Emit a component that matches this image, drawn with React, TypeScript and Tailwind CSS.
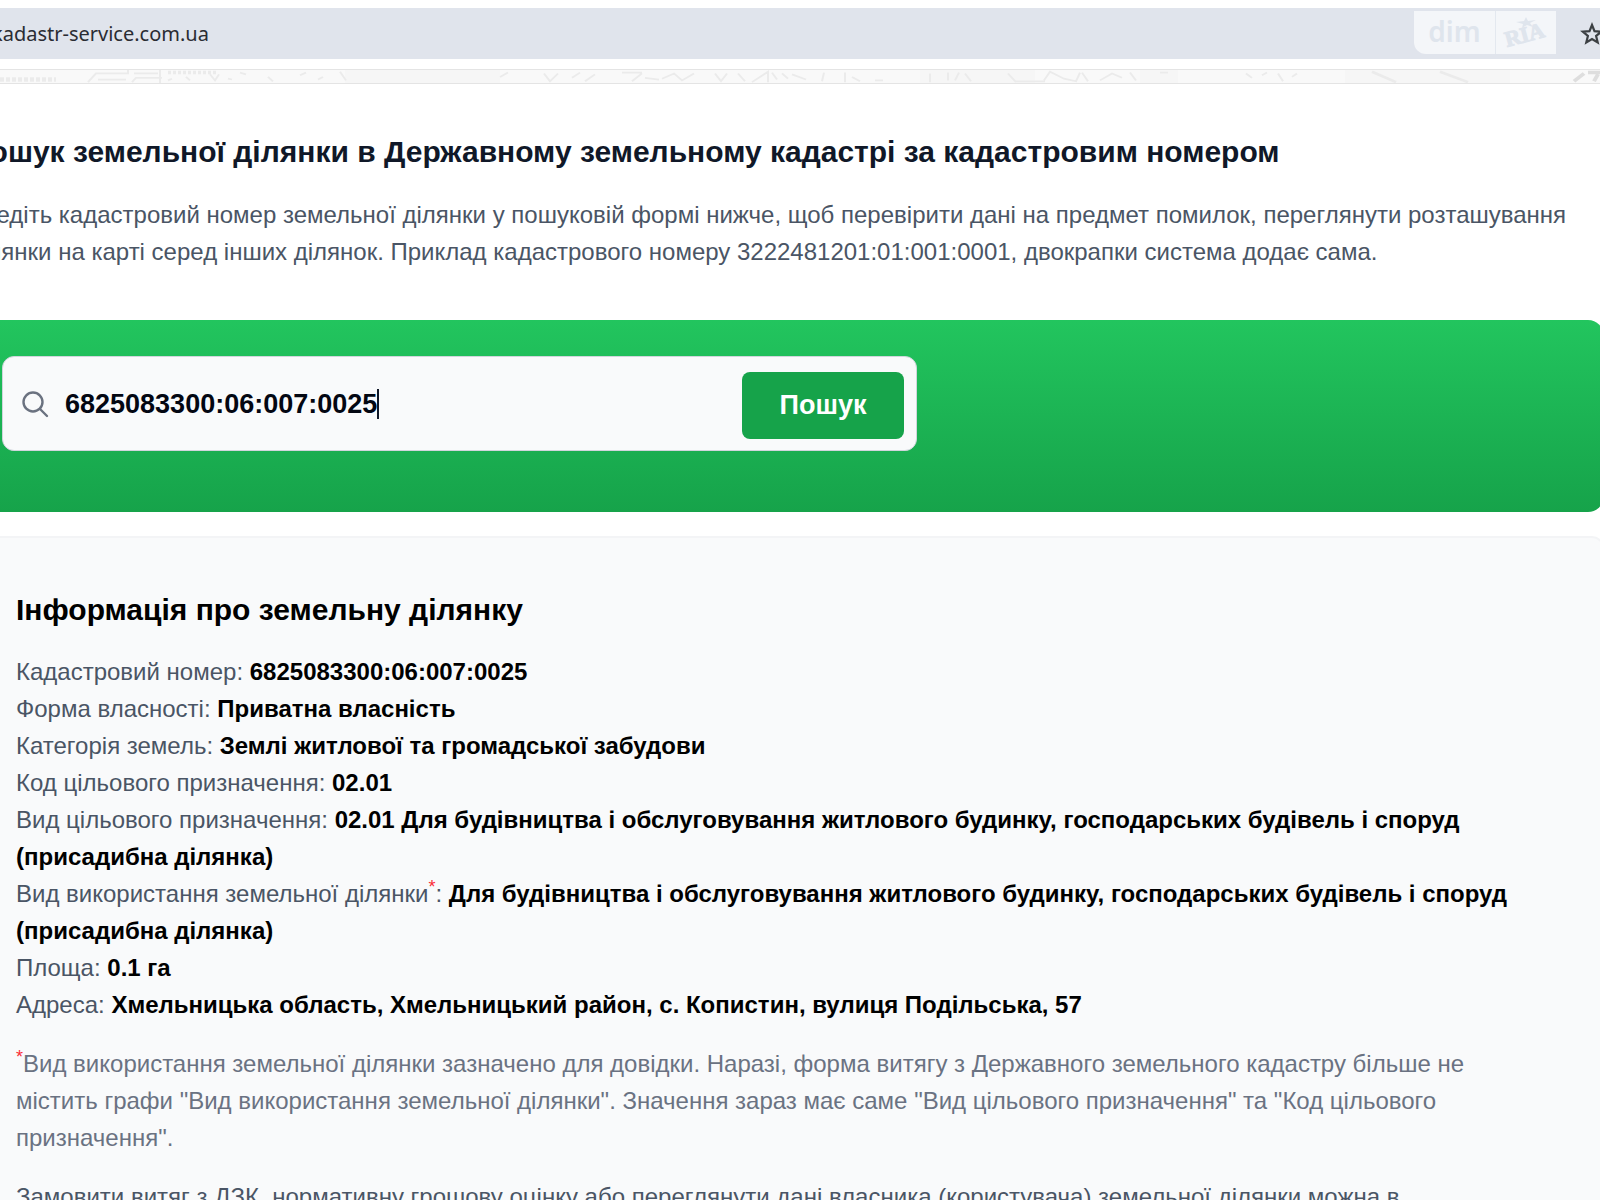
import React, { useState } from 'react';

interface ParcelField {
  label: string;
  value: string;
  hasNote?: boolean;
}

const parcelFields: ParcelField[] = [
  { label: 'Кадастровий номер', value: '6825083300:06:007:0025' },
  { label: 'Форма власності', value: 'Приватна власність' },
  { label: 'Категорія земель', value: 'Землі житлової та громадської забудови' },
  { label: 'Код цільового призначення', value: '02.01' },
  {
    label: 'Вид цільового призначення',
    value: '02.01 Для будівництва і обслуговування житлового будинку, господарських будівель і споруд (присадибна ділянка)',
  },
  {
    label: 'Вид використання земельної ділянки',
    value: 'Для будівництва і обслуговування житлового будинку, господарських будівель і споруд (присадибна ділянка)',
    hasNote: true,
  },
  { label: 'Площа', value: '0.1 га' },
  { label: 'Адреса', value: 'Хмельницька область, Хмельницький район, с. Копистин, вулиця Подільська, 57' },
];

const Asterisk = () => <sup className="text-lg leading-none text-red-500">*</sup>;

const Watermark = () => (
  <div className="mb-[2px] flex h-[43px] w-[142px] rounded-bl-xl bg-[#f4f6f9] text-[#dfe5ed]">
    <span className="flex w-[82px] items-center justify-center border-r border-[#e3e8ef] pb-1 font-['Noto_Sans'] text-[28px] leading-none font-semibold">
      dim
    </span>
    <svg viewBox="0 0 60 43" className="h-[43px] w-[60px]" fill="currentColor" aria-label="RIA">
      <text x="11" y="36" transform="rotate(-15 11 36)" fontFamily="Liberation Serif, serif" fontWeight="bold" fontSize="22" stroke="currentColor">
        RIA
      </text>
      <path d="M30 6l2 4 8-1-6 3 3 4-6-2-5 3 1-4-7-2 8-1z" />
    </svg>
  </div>
);

const AddressBar = () => (
  <header className="pt-2 pb-[10px]">
    <div className="flex h-[51px] items-center justify-between bg-[#e0e4ec]">
      <span className="-ml-2 font-['Noto_Sans',sans-serif] text-xl text-[#2a2c33]">kadastr-service.com.ua</span>
      <div className="-mr-1 flex items-center gap-6">
        <Watermark />
        <button type="button" aria-label="Додати в закладки">
          <svg viewBox="0 0 24 24" className="size-6" fill="none" stroke="#3c4043" strokeWidth="2.2">
            <path d="M12 3l2.5 6.2 6.7.5-5.1 4.3 1.6 6.5L12 17l-5.7 3.5 1.6-6.5-5.1-4.3 6.7-.5z" />
          </svg>
        </button>
      </div>
    </div>
  </header>
);

// Faded map background that peeks out under the site header
const MapStrip = () => (
  <svg viewBox="0 0 1600 15" preserveAspectRatio="none" className="block h-[15px] w-full border-y border-[#e4e4e4] bg-[#f9f9f9]" fill="none" stroke="#ebebeb" strokeWidth="2">
    <path d="M345 0h155v15H345zM1000 0h35v15h-35zM1345 0h165v15h-165zM1140 0h38v15h-38zM920 0h80v15h-80z" fill="#f6f6f6" stroke="none" />
    <path d="M0 11h56" strokeWidth="5" strokeDasharray="4 2" />
    <path d="M88 14l8-10h32V0M98 11h28M132 14l4-5h26M134 4h24M160 0v15" />
    <path d="M168 3h50" strokeWidth="4" strokeDasharray="3 2" />
    <path d="M210 5l5 7 4-7M168 12l4-2M186 8l4 4M228 10l4 1M240 3l6 2M268 8l5 5M300 6l6-3M318 11l5-3M340 2l6 10" />
    <path d="M500 8l8-5M544 4l6 9 8-9M572 9l8-6M585 13l10-8M622 3h20M632 13l10-9M645 9l14 2M662 10l12-6 8 8 12-8" />
    <path d="M715 4l6 9 6-9M738 4l7 9M752 14l16-12v12M772 3l5 8M782 4l6 6M792 5l14 6M824 3l-2 10M845 3v11M852 8l8 5M875 12h8M930 4v10M948 3v9M955 12l4-9M965 4l6 9" />
    <path d="M1008 4l8 10M1015 13h30M1044 12l6-10 14 8 12 3 4-10M1082 3l6 10M1100 12l12-8 10 5M1130 3l6 9M1160 3h8M1246 4l6 5M1262 6l5-3M1278 4l5 9M1292 8l5-4" />
    <path d="M1372 2l24 12M1440 2l28 12" strokeWidth="3" />
    <path d="M1574 13l10-9M1588 3h12M1594 13l4-8" stroke="#dedede" strokeWidth="4" />
  </svg>
);

const SearchForm = () => {
  const [query, setQuery] = useState('6825083300:06:007:0025');

  return (
    <div className="-mr-1 rounded-r-2xl bg-linear-to-b from-[#22c55e] to-[#16a34a] pt-9 pr-4 pb-[61px] pl-[2px]">
      <form
        onSubmit={(e) => e.preventDefault()}
        className="flex h-[95px] w-[915px] max-w-full items-center rounded-xl border border-gray-300 bg-gray-50 pr-3 pl-[18px]"
      >
        <svg viewBox="0 0 28 28" className="size-7 shrink-0" fill="none" stroke="#6b7280" strokeWidth="2.4" strokeLinecap="round">
          <circle cx="12" cy="12" r="9.5" />
          <path d="M19 19l7 7" />
        </svg>
        <div className="flex min-w-0 flex-1 items-center pl-4">
          <input
            type="text"
            aria-label="Кадастровий номер"
            value={query}
            onChange={(e) => setQuery(e.target.value)}
            className="field-sizing-content bg-transparent text-[27px] leading-9 font-bold text-gray-950 caret-transparent outline-none"
          />
          <span className="h-[30px] w-[2px] shrink-0 bg-gray-900" />
        </div>
        <button type="submit" className="mt-1 h-[67px] w-[162px] rounded-lg bg-[#16a34a] text-[27px] font-bold text-white">
          Пошук
        </button>
      </form>
    </div>
  );
};

const ParcelInfo = () => (
  <section className="mt-6 -mr-1 rounded-tr-xl border-t-2 border-r-2 border-gray-100 bg-gray-50 px-4 pt-[52px]">
    <h2 className="text-[30px] leading-10 font-bold text-black">Інформація про земельну ділянку</h2>
    <dl className="mt-[23px] text-2xl leading-[37px]">
      {parcelFields.map((field) => (
        <div key={field.label}>
          <dt className="inline text-gray-600">
            {field.label}
            {field.hasNote && <Asterisk />}:{' '}
          </dt>
          <dd className="inline font-bold text-black">{field.value}</dd>
        </div>
      ))}
    </dl>
    <p className="mt-[22px] text-2xl leading-[37px] text-gray-500">
      <Asterisk />
      Вид використання земельної ділянки зазначено для довідки. Наразі, форма витягу з Державного земельного кадастру більше не
      <br />
      містить графи "Вид використання земельної ділянки". Значення зараз має саме "Вид цільового призначення" та "Код цільового
      <br />
      призначення".
    </p>
    <p className="mt-[22px] text-2xl leading-[37px] text-gray-600">
      Замовити витяг з ДЗК, нормативну грошову оцінку або переглянути дані власника (користувача) земельної ділянки можна в
    </p>
  </section>
);

export default function App() {
  return (
    <div className="h-screen overflow-hidden bg-white font-['Liberation_Sans',Arial,sans-serif]">
      <AddressBar />
      <MapStrip />
      <main>
        <div className="-ml-8 pt-12 pb-[50px]">
          <h1 className="text-[30px] leading-10 font-bold text-gray-900">
            Пошук земельної ділянки в Державному земельному кадастрі за кадастровим номером
          </h1>
          <p className="mt-6 text-2xl leading-[37px] text-gray-600">
            Введіть кадастровий номер земельної ділянки у пошуковій формі нижче, щоб перевірити дані на предмет помилок, переглянути розташування
            <br />
            ділянки на карті серед інших ділянок. Приклад кадастрового номеру 3222481201:01:001:0001, двокрапки система додає сама.
          </p>
        </div>
        <SearchForm />
        <ParcelInfo />
      </main>
    </div>
  );
}
